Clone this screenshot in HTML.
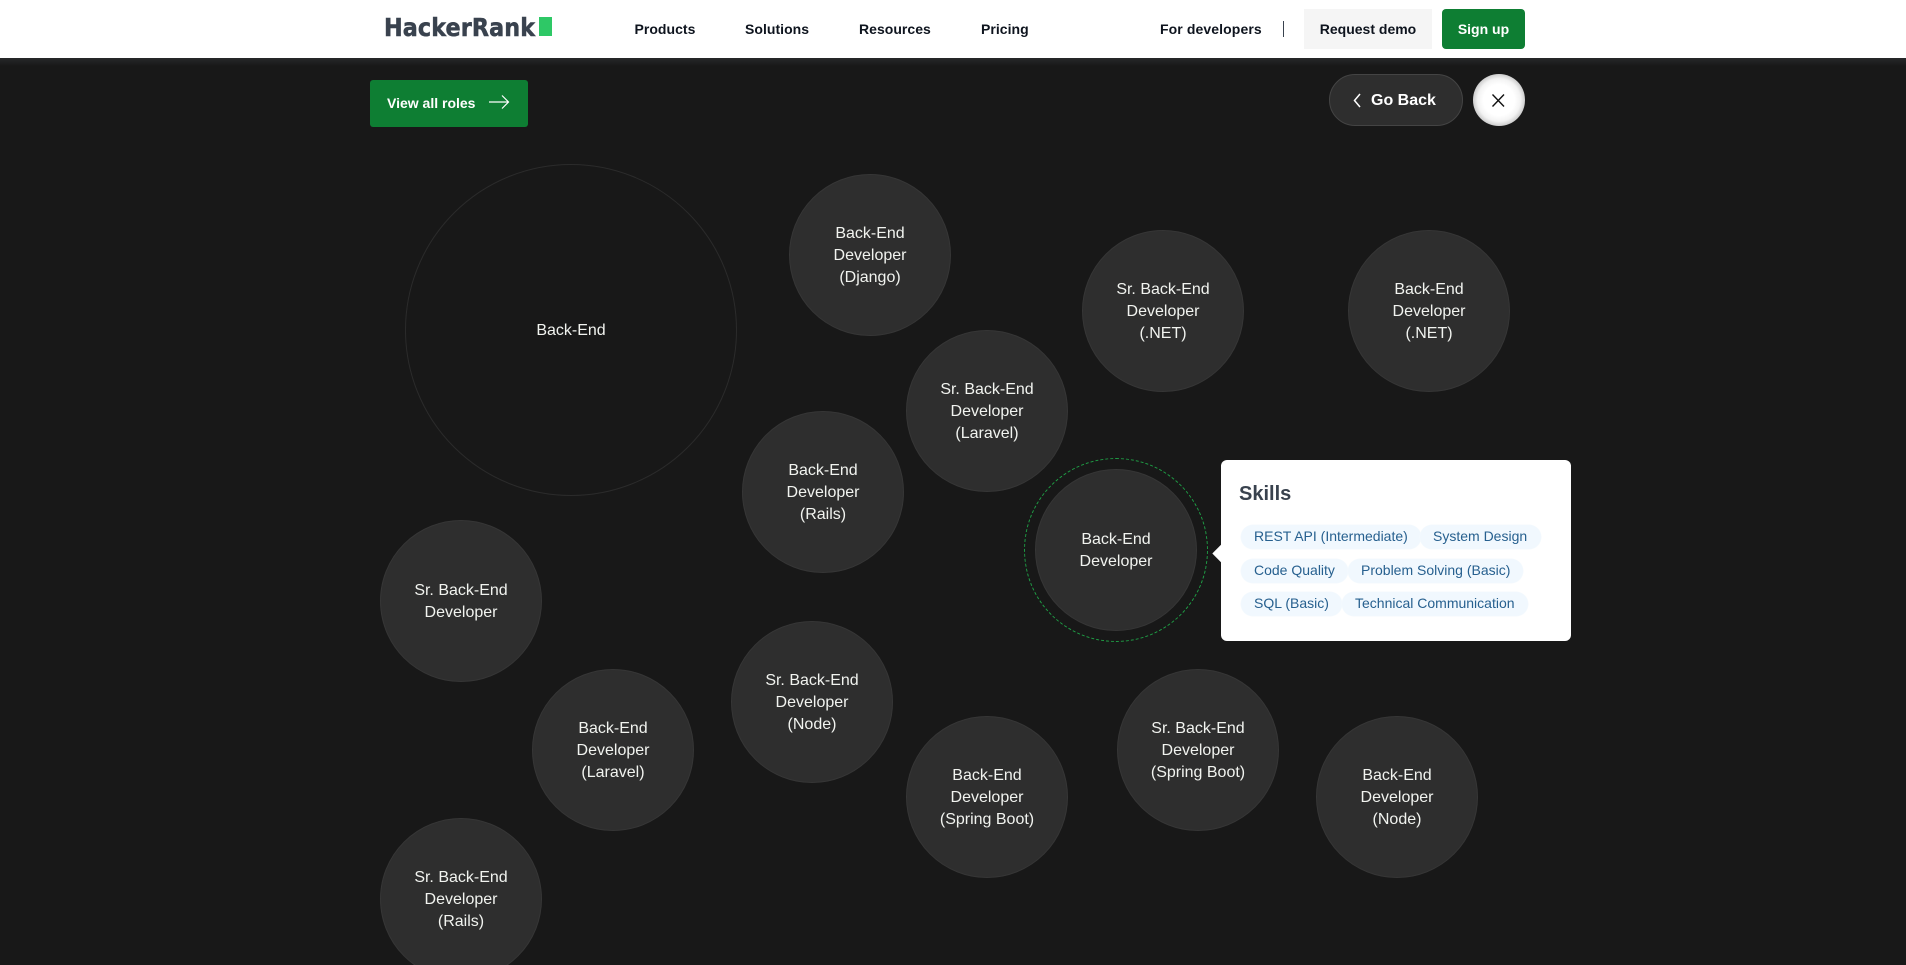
<!DOCTYPE html>
<html lang="en"><head><meta charset="utf-8"><title>HackerRank Roles</title>
<style>
html,body{margin:0;padding:0;width:1906px;height:965px;overflow:hidden;background:#181818;font-family:"Liberation Sans",Arial,sans-serif}
*{box-sizing:border-box}
#root{position:relative;width:1906px;height:965px;overflow:hidden;background:#181818}
.a{position:absolute;white-space:nowrap}
#hdr{position:absolute;left:0;top:0;width:1906px;height:58px;background:#fff}
#sh{position:absolute;left:0;top:58px;width:1906px;height:8px;background:linear-gradient(#27282a,#181818)}
.n{position:absolute;top:20px;font-size:14px;line-height:18px;font-weight:700;color:#0e141e;white-space:nowrap;letter-spacing:.03px}
.c{position:absolute;width:162px;height:162px;border-radius:50%;background:#2e2e2e;border:1px solid #363636;color:#f1f3ef;font-size:16px;line-height:22px;text-align:center;display:flex;align-items:center;justify-content:center;padding-top:2px}
.chip{position:absolute;height:24px;border-radius:12px;background:#f1f8fe;color:#27608f;font-size:14px;line-height:23px;padding:0 13px;white-space:nowrap;box-shadow:0 0 0 .5px #f5fafe}
</style></head><body>
<div id="root">
<div id="hdr"></div><div id="sh"></div>
<div class="a" style="left:384px;top:14.5px;font-size:22.3px;line-height:27px;font-family:'DejaVu Sans','Liberation Sans',sans-serif;font-weight:700;color:#39424e;letter-spacing:.1px;-webkit-text-stroke:.45px #39424e;transform:scaleY(1.13);transform-origin:0 50%">HackerRank</div>
<div class="a" style="left:539px;top:17px;width:13px;height:19px;background:#2ec866"></div>
<div class="n" style="left:634.5px">Products</div>
<div class="n" style="left:745px">Solutions</div>
<div class="n" style="left:859px">Resources</div>
<div class="n" style="left:981px">Pricing</div>
<div class="n" style="left:1160px;letter-spacing:.1px">For developers</div>
<div class="a" style="left:1283px;top:21px;width:1px;height:16px;background:#39424e"></div>
<div class="a" style="left:1304px;top:9px;width:128px;height:40px;background:#f5f5f5;font-size:14px;font-weight:700;line-height:40px;text-align:center;color:#0e141e">Request demo</div>
<div class="a" style="left:1442px;top:9px;width:83px;height:40px;background:#0e7e33;border-radius:4px;font-size:14px;font-weight:700;line-height:40px;text-align:center;color:#fff">Sign up</div>

<div class="a" style="left:370px;top:80px;width:158px;height:47px;background:#0e7e33;border-radius:3px"></div>
<div class="a" style="left:387px;top:94px;font-size:14px;line-height:18px;font-weight:700;color:#fff">View all roles</div>
<svg class="a" style="left:488px;top:92px" width="22" height="20" viewBox="0 0 22 20" fill="none" stroke="#fff" stroke-width="1.2"><path d="M1 10H20M14 3.5l6.5 6.5-6.5 6.5"/></svg>

<div class="a" style="left:1329px;top:74px;width:134px;height:52px;border-radius:26px;background:#2e2e2e;border:1px solid #444"></div>
<svg class="a" style="left:1351px;top:91px" width="12" height="18" viewBox="0 0 12 18" fill="none" stroke="#fff" stroke-width="1.5"><path d="M9 3L3.5 9.5 9 16"/></svg>
<div class="a" style="left:1371px;top:91px;font-size:16px;line-height:20px;font-weight:700;color:#fff">Go Back</div>
<div class="a" style="left:1473px;top:74px;width:51.5px;height:51.5px;border-radius:50%;background:radial-gradient(circle closest-side,#fff 60%,#f3f3f3 82%,#cdcdcd 100%)"></div>
<svg class="a" style="left:1490px;top:92px" width="16" height="16" viewBox="0 0 16 16" fill="none" stroke="#111" stroke-width="1.4"><path d="M2.5 2.5L14 14.5M14 2.5L2.5 14.5"/></svg>

<div class="c" style="left:405px;top:164px;width:332px;height:332px;background:#181818;border:1px solid #2b2b2b">Back-End</div>
<div class="c" style="left:789px;top:174px">Back-End<br>Developer<br>(Django)</div>
<div class="c" style="left:1082px;top:230px">Sr. Back-End<br>Developer<br>(.NET)</div>
<div class="c" style="left:1348px;top:230px">Back-End<br>Developer<br>(.NET)</div>
<div class="c" style="left:906px;top:330px">Sr. Back-End<br>Developer<br>(Laravel)</div>
<div class="c" style="left:742px;top:411px">Back-End<br>Developer<br>(Rails)</div>
<div class="c" style="left:1035px;top:469px">Back-End<br>Developer</div>
<div class="a" style="left:1024px;top:458px;width:184px;height:184px;border-radius:50%;border:1px dashed #1f9d45"></div>
<div class="c" style="left:380px;top:520px">Sr. Back-End<br>Developer</div>
<div class="c" style="left:532px;top:669px">Back-End<br>Developer<br>(Laravel)</div>
<div class="c" style="left:731px;top:621px">Sr. Back-End<br>Developer<br>(Node)</div>
<div class="c" style="left:906px;top:716px">Back-End<br>Developer<br>(Spring Boot)</div>
<div class="c" style="left:1117px;top:669px">Sr. Back-End<br>Developer<br>(Spring Boot)</div>
<div class="c" style="left:1316px;top:716px">Back-End<br>Developer<br>(Node)</div>
<div class="c" style="left:380px;top:818px">Sr. Back-End<br>Developer<br>(Rails)</div>

<div class="a" style="left:1221px;top:460px;width:350px;height:181px;background:#fff;border-radius:6px"></div>
<div class="a" style="left:1214.5px;top:546.5px;width:13px;height:13px;background:#fff;transform:rotate(45deg)"></div>
<div class="a" style="left:1239px;top:482px;font-size:20px;line-height:24px;font-weight:700;color:#39424e">Skills</div>
<div class="chip" style="left:1241px;top:525px">REST API (Intermediate)</div>
<div class="chip" style="left:1420px;top:525px;padding-right:14px">System Design</div>
<div class="chip" style="left:1241px;top:559px">Code Quality</div>
<div class="chip" style="left:1348px;top:559px">Problem Solving (Basic)</div>
<div class="chip" style="left:1241px;top:592px">SQL (Basic)</div>
<div class="chip" style="left:1342px;top:592px">Technical Communication</div>
</div>
</body></html>
